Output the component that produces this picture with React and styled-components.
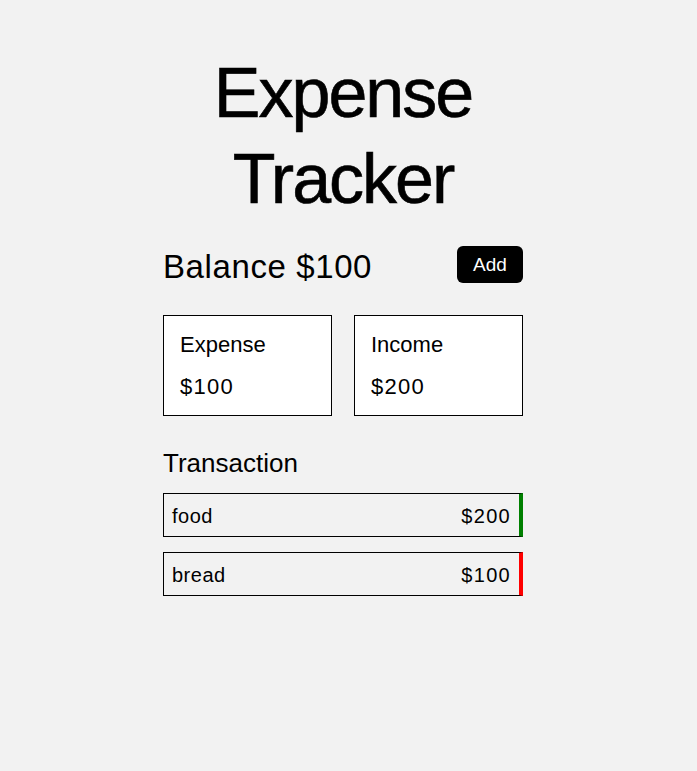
import React from 'react';
import styled, { createGlobalStyle } from 'styled-components';

const GlobalStyle = createGlobalStyle`
  body {
    margin: 0;
    background: #f2f2f2;
    font-family: "Liberation Sans", Arial, sans-serif;
    color: #000;
  }
`;

const Page = styled.div`
  display: flex;
  justify-content: center;
  padding: 50px 11px 0 0;
`;

const Container = styled.div`
  width: 360px;
`;

const Title = styled.h1`
  margin: 0;
  font-size: 70px;
  line-height: 86px;
  font-weight: 400;
  letter-spacing: -2px;
  text-align: center;
  -webkit-text-stroke: 0.6px #000;
`;

const Header = styled.div`
  display: flex;
  justify-content: space-between;
  align-items: center;
  margin-top: 24px;
  height: 37px;
`;

const Balance = styled.h2`
  margin: 0;
  font-size: 33px;
  line-height: 37px;
  font-weight: 400;
  letter-spacing: 0.6px;
  position: relative;
  top: 2px;
`;

const AddButton = styled.button`
  width: 66px;
  height: 37px;
  border: none;
  border-radius: 6px;
  background: #000;
  color: #fff;
  font-family: inherit;
  font-size: 19px;
  cursor: pointer;
`;

const Cards = styled.div`
  display: grid;
  grid-template-columns: 1fr 1fr;
  gap: 22px;
  margin-top: 32px;
`;

const Card = styled.div`
  display: flex;
  flex-direction: column;
  gap: 16px;
  padding: 16px;
  background: #fff;
  border: 1px solid #000;
  height: 101px;
  box-sizing: border-box;
  font-size: 22px;
  line-height: 26px;
`;

const Amount = styled.span`
  letter-spacing: 1.3px;
`;

const SectionTitle = styled.h3`
  margin: 32px 0 15px;
  font-size: 26px;
  line-height: 30px;
  font-weight: 400;
`;

const List = styled.div`
  display: flex;
  flex-direction: column;
  gap: 15px;
`;

const Row = styled.div`
  display: flex;
  justify-content: space-between;
  align-items: center;
  height: 44px;
  box-sizing: border-box;
  padding: 2px 8px 0;
  border: 1px solid #000;
  border-right: 4px solid ${(props) => (props.income ? '#008000' : '#ff0000')};
  font-size: 20px;
  line-height: 24px;
  letter-spacing: 0.5px;
`;

const transactions = [
  { id: 1, text: 'food', amount: 200, income: true },
  { id: 2, text: 'bread', amount: 100, income: false },
];

const App = () => {
  return (
    <>
      <GlobalStyle />
      <Page>
        <Container>
          <Title>Expense Tracker</Title>
          <Header>
            <Balance>Balance $100</Balance>
            <AddButton>Add</AddButton>
          </Header>
          <Cards>
            <Card>
              <span>Expense</span>
              <Amount>$100</Amount>
            </Card>
            <Card>
              <span>Income</span>
              <Amount>$200</Amount>
            </Card>
          </Cards>
          <SectionTitle>Transaction</SectionTitle>
          <List>
            {transactions.map((t) => (
              <Row key={t.id} income={t.income}>
                <span>{t.text}</span>
                <Amount>${t.amount}</Amount>
              </Row>
            ))}
          </List>
        </Container>
      </Page>
    </>
  );
};

export default App;
